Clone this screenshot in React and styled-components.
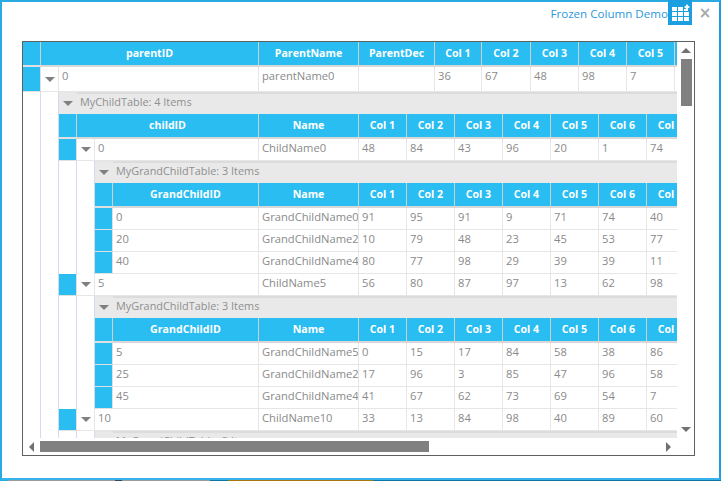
import styled, { createGlobalStyle } from "styled-components";

const GlobalStyle = createGlobalStyle`
  html, body { margin: 0; padding: 0; background: #fff; }
  body { font-family: "Open Sans", "Liberation Sans", sans-serif; }
`;

const parentCols = [218, 100, 76, 47, 49, 48, 48, 48, 48];
const childCols = [182, 100, 48, 48, 48, 48, 48, 48, 48];
const grandCols = [146, 100, 48, 48, 48, 48, 48, 48, 48];

const childHead = ["childID", "Name", "Col 1", "Col 2", "Col 3", "Col 4", "Col 5", "Col 6", "Col 7"];
const grandHead = ["GrandChildID", "Name", "Col 1", "Col 2", "Col 3", "Col 4", "Col 5", "Col 6", "Col 7"];

const children = [
  {
    cells: ["0", "ChildName0", 48, 84, 43, 96, 20, 1, 74],
    rows: [
      ["0", "GrandChildName0", 91, 95, 91, 9, 71, 74, 40],
      ["20", "GrandChildName2", 10, 79, 48, 23, 45, 53, 77],
      ["40", "GrandChildName4", 80, 77, 98, 29, 39, 39, 11],
    ],
  },
  {
    cells: ["5", "ChildName5", 56, 80, 87, 97, 13, 62, 98],
    rows: [
      ["5", "GrandChildName5", 0, 15, 17, 84, 58, 38, 86],
      ["25", "GrandChildName2", 17, 96, 3, 85, 47, 96, 58],
      ["45", "GrandChildName4", 41, 67, 62, 73, 69, 54, 7],
    ],
  },
  {
    cells: ["10", "ChildName10", 33, 13, 84, 98, 40, 89, 60],
    rows: [],
  },
];

const stripParts = [
  { w: 8, c: "#29abe2" },
  { w: 107, c: "#9a9a9a" },
  { w: 7, c: "#2a4a66" },
  { w: 88, c: "#9a9a9a" },
  { w: 18, c: "#0b76a8" },
  { w: 145, c: "#a8780f" },
  { w: 348, c: "#0b76a8" },
];

function GridIcon() {
  return (
    <svg width="24" height="25" viewBox="0 0 24 25">
      <g fill="#fff">
        <rect x="4" y="7" width="5" height="4" />
        <rect x="10" y="7" width="5" height="4" />
        <rect x="16" y="9" width="4" height="2" />
        <rect x="4" y="12" width="5" height="4" />
        <rect x="10" y="12" width="5" height="4" />
        <rect x="16" y="12" width="5" height="4" />
        <rect x="4" y="17" width="5" height="4" />
        <rect x="10" y="17" width="5" height="4" />
        <rect x="16" y="17" width="5" height="4" />
        <path d="M19 4l1.2 1.8 1.8 1.2-1.8 1.2-1.2 1.8-1.2-1.8-1.8-1.2 1.8-1.2z" />
      </g>
    </svg>
  );
}

function GroupHeader({ title }) {
  return (
    <GroupBar>
      <GroupToggle><Arrow /></GroupToggle>
      <GroupTitle>{title}</GroupTitle>
    </GroupBar>
  );
}

function App() {
  return (
    <Page>
      <GlobalStyle />
      <Dialog>
        <TitleBar>
          <Title>Frozen Column Demo</Title>
          <TitleIcon><GridIcon /></TitleIcon>
          <CloseButton>×</CloseButton>
        </TitleBar>
        <GridFrame>
          <Viewport>
            <Content>
              <Row>
                <Indicator $h={25} $head />
                {["parentID", "ParentName", "ParentDec", "Col 1", "Col 2", "Col 3", "Col 4", "Col 5", "Col 6"].map((t, i) => (
                  <HeadCell key={i} $w={parentCols[i]}>{t}</HeadCell>
                ))}
              </Row>
              <Row>
                <Indicator $h={25} />
                <Expander $h={25}><Arrow /></Expander>
                {["0", "parentName0", "", 36, 67, 48, 98, 7, ""].map((t, i) => (
                  <DataCell key={i} $w={i === 0 ? parentCols[0] - 18 : parentCols[i]} $h={25}>{t}</DataCell>
                ))}
              </Row>
              <Nested>
                <Spacer />
                <Spacer />
                <NestedBody>
                  <GroupHeader title="MyChildTable: 4 Items" />
                  <Row>
                    <Indicator $h={25} $head />
                    {childHead.map((t, i) => (
                      <HeadCell key={i} $w={childCols[i]}>{t}</HeadCell>
                    ))}
                  </Row>
                  {children.map((child) => (
                    <div key={child.cells[0]}>
                      <Row>
                        <Indicator $h={22} />
                        <Expander $h={22}><Arrow /></Expander>
                        {child.cells.map((t, i) => (
                          <DataCell key={i} $w={i === 0 ? childCols[0] - 18 : childCols[i]} $h={22}>{t}</DataCell>
                        ))}
                      </Row>
                      <Nested>
                        <Spacer />
                        <Spacer />
                        <NestedBody>
                          <GroupHeader title="MyGrandChildTable: 3 Items" />
                          {child.rows.length > 0 && (
                            <Row>
                              <Indicator $h={25} $head />
                              {grandHead.map((t, i) => (
                                <HeadCell key={i} $w={grandCols[i]}>{t}</HeadCell>
                              ))}
                            </Row>
                          )}
                          {child.rows.map((row) => (
                            <Row key={row[0]}>
                              <Indicator $h={22} />
                              {row.map((t, i) => (
                                <DataCell key={i} $w={grandCols[i]} $h={22}>{t}</DataCell>
                              ))}
                            </Row>
                          ))}
                        </NestedBody>
                      </Nested>
                    </div>
                  ))}
                </NestedBody>
              </Nested>
            </Content>
          </Viewport>
          <VScroll>
            <ArrowUp />
            <VThumb />
            <ArrowDown />
          </VScroll>
          <HScroll>
            <ArrowLeft />
            <HThumb />
            <ArrowRight />
          </HScroll>
        </GridFrame>
      </Dialog>
      <DesktopStrip>
        {stripParts.map((p, i) => (
          <StripPart key={i} $w={p.w} $c={p.c} />
        ))}
      </DesktopStrip>
    </Page>
  );
}

export default App;

const Page = styled.div`
  width: 721px;
  height: 481px;
  overflow: hidden;
  background: #fff;
`;

const Dialog = styled.div`
  box-sizing: border-box;
  width: 721px;
  height: 480px;
  border: 2px solid #29abe2;
  border-right-color: #1c9fe0;
  border-bottom-color: #35b3ea;
  padding: 0 0 0 20px;
  background: #fff;
`;

const DesktopStrip = styled.div`
  display: flex;
  height: 1px;
`;

const StripPart = styled.div`
  width: ${(p) => p.$w}px;
  background: ${(p) => p.$c};
`;

const TitleBar = styled.div`
  display: flex;
  justify-content: flex-end;
  align-items: flex-start;
  height: 41px;
  margin-top: -2px;
  padding-right: 1px;
`;

const Title = styled.span`
  font-size: 11.6px;
  line-height: 28px;
  color: #2b98dc;
`;

const TitleIcon = styled.div`
  width: 24px;
  height: 25px;
  background: #1c9fe0;
`;

const CloseButton = styled.span`
  width: 26px;
  text-align: center;
  font-family: "DejaVu Sans", sans-serif;
  font-size: 15px;
  font-weight: bold;
  line-height: 26px;
  color: #a8a8a8;
`;

const GridFrame = styled.div`
  box-sizing: border-box;
  display: grid;
  grid-template-columns: 654px 1fr;
  grid-template-rows: 396px 1fr;
  width: 673px;
  height: 415px;
  border: 1px solid #606060;
`;

const Viewport = styled.div`
  overflow: hidden;
`;

const Content = styled.div`
  width: 900px;
`;

const Row = styled.div`
  display: flex;
`;

const Indicator = styled.div`
  box-sizing: border-box;
  flex: none;
  width: 18px;
  height: ${(p) => p.$h}px;
  background: #29bdf2;
  border-right: 1px solid ${(p) => (p.$head ? "#d0d0d0" : "#e0e0e0")};
  border-bottom: ${(p) => (p.$head ? 2 : 1)}px solid #e0e0e0;
`;

const Expander = styled.div`
  box-sizing: border-box;
  flex: none;
  display: flex;
  align-items: center;
  justify-content: center;
  width: 18px;
  height: ${(p) => p.$h}px;
  border-right: 1px solid #e6e6e6;
  border-bottom: 1px solid #e6e6e6;
`;

const HeadCell = styled.div`
  box-sizing: border-box;
  flex: none;
  width: ${(p) => p.$w}px;
  height: 25px;
  background: #29bdf2;
  border-right: 1px solid #d0d0d0;
  border-bottom: 2px solid #d8d8d8;
  font-size: 10.6px;
  font-weight: 700;
  line-height: 23px;
  color: #fff;
  text-align: center;
  white-space: nowrap;
  overflow: hidden;
`;

const DataCell = styled.div`
  box-sizing: border-box;
  flex: none;
  width: ${(p) => p.$w}px;
  height: ${(p) => p.$h}px;
  padding: 0 0 0 3px;
  border-right: 1px solid #e6e6e6;
  border-bottom: 1px solid #e6e6e6;
  font-size: 11.2px;
  line-height: ${(p) => (p.$h > 22 ? 18 : 17)}px;
  color: #8a8a8a;
  white-space: nowrap;
  overflow: hidden;
`;

const Nested = styled.div`
  display: flex;
`;

const Spacer = styled.div`
  flex: none;
  box-sizing: border-box;
  width: 18px;
  border-right: 1px solid #d3dcec;
`;

const NestedBody = styled.div`
  flex: 1;
  min-width: 0;
`;

const GroupBar = styled.div`
  display: flex;
  height: 22px;
  background: #e9e9e9;
`;

const GroupToggle = styled.div`
  box-sizing: border-box;
  flex: none;
  display: flex;
  align-items: center;
  justify-content: center;
  width: 18px;
  border-top: 1px solid #e6e6e6;
`;

const GroupTitle = styled.div`
  box-sizing: border-box;
  flex: 1;
  padding-left: 3px;
  border-top: 2px solid #dcdcdc;
  font-size: 10.9px;
  line-height: 15px;
  color: #8f8f8f;
  white-space: nowrap;
`;

const Arrow = styled.div`
  flex: none;
  width: 0;
  height: 0;
  margin-top: 0;
  border-left: 5px solid transparent;
  border-right: 5px solid transparent;
  border-top: 5px solid #808080;
`;

const VScroll = styled.div`
  display: flex;
  flex-direction: column;
  align-items: center;
  padding: 6px 2px 0 3px;
`;

const ArrowUp = styled.div`
  width: 0;
  height: 0;
  border-left: 5px solid transparent;
  border-right: 5px solid transparent;
  border-bottom: 5px solid #707070;
`;

const ArrowDown = styled.div`
  width: 0;
  height: 0;
  margin-top: auto;
  margin-bottom: 6px;
  border-left: 5px solid transparent;
  border-right: 5px solid transparent;
  border-top: 5px solid #707070;
`;

const VThumb = styled.div`
  width: 11px;
  height: 47px;
  margin-top: 6px;
  background: #808080;
`;

const HScroll = styled.div`
  display: flex;
  align-items: center;
  height: 17px;
  padding: 0 6px;
`;

const ArrowLeft = styled.div`
  width: 0;
  height: 0;
  border-top: 5px solid transparent;
  border-bottom: 5px solid transparent;
  border-right: 5px solid #707070;
`;

const ArrowRight = styled.div`
  width: 0;
  height: 0;
  margin-left: auto;
  border-top: 5px solid transparent;
  border-bottom: 5px solid transparent;
  border-left: 5px solid #707070;
`;

const HThumb = styled.div`
  width: 389px;
  height: 11px;
  margin-left: 6px;
  background: #808080;
`;
